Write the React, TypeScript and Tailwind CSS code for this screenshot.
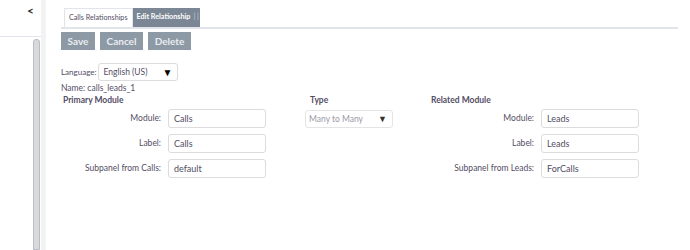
import React from 'react';

const Field = ({ label, value }: { label: string; value: string }) => (
    <div className="flex items-center h-[25px]">
        <span className="flex-1 text-right pr-[7px] text-[8.5px] text-[#534d64]">{label}</span>
        <div className="w-[98px] h-[19px] border border-[#dcdcdc] rounded-[3px] bg-white px-[5px] flex items-center text-[9px] text-[#534d64]">
            {value}
        </div>
    </div>
);

const App = () => {
    return (
        <div className="w-[690px] h-[250px] bg-white flex overflow-hidden" style={{ fontFamily: 'Lato, "Open Sans", sans-serif' }}>
            {/* left sidebar */}
            <div className="w-[41px] flex flex-col bg-white">
                <div className="h-[37px] border-b border-[#e0e4ea] flex justify-end pr-[7px] pt-[2px] text-[12px] font-bold text-[#333]">
                    &lt;
                </div>
                <div className="flex-1 flex justify-end pr-[1px] pt-[2px]">
                    <div className="w-[7px] h-full rounded-t-[3px] bg-[#d9d9d9] border border-[#b9bec6]" />
                </div>
            </div>
            <div className="w-[5px] bg-[#f2f2f2]" />

            {/* main */}
            <div className="flex-1 pl-[15px] pr-[12px] pt-[10px]">
                <div className="flex items-end border-b-2 border-[#e1e4ea] h-[19px] pl-[3px]">
                    <div className="h-[19px] px-[4px] border border-b-0 border-[#e1e4ea] bg-white flex items-center text-[7.2px] text-[#534d64]">
                        Calls Relationships
                    </div>
                    <div className="h-[19px] pl-[4px] pr-[1px] bg-[#7b8794] flex items-center text-[7.2px] font-bold text-white">
                        Edit Relationship <span className="ml-[3px] text-[#c4cad1] font-normal">| |</span>
                    </div>
                </div>

                <div className="flex gap-[5px] mt-[3px]">
                    <div className="w-[34px] h-[18px] bg-[#8e99a6] text-[#e9ecef] text-[10px] font-bold flex items-center justify-center">Save</div>
                    <div className="w-[43px] h-[18px] bg-[#8e99a6] text-[#e9ecef] text-[10px] font-bold flex items-center justify-center">Cancel</div>
                    <div className="w-[43px] h-[18px] bg-[#8e99a6] text-[#e9ecef] text-[10px] font-bold flex items-center justify-center">Delete</div>
                </div>

                <div className="flex items-center mt-[13px] text-[8px] text-[#534d64]">
                    <span>Language:</span>
                    <div className="ml-[2px] w-[80px] h-[18px] border border-[#dcdcdc] rounded-[3px] flex items-center justify-between pl-[4px] pr-[5px] text-[8.5px]">
                        <span>English (US)</span>
                        <span className="text-[10px] text-black">▼</span>
                    </div>
                </div>
                <div className="text-[8.5px] text-[#534d64] mt-[1px] leading-[12px]">Name: calls_leads_1</div>

                <div className="flex mt-[1px]">
                    <div className="w-[205px]">
                        <div className="text-[8.5px] font-bold text-[#534d64] pl-[2px] h-[11px] leading-[11px]">Primary Module</div>
                        <Field label="Module:" value="Calls" />
                        <Field label="Label:" value="Calls" />
                        <Field label="Subpanel from Calls:" value="default" />
                    </div>
                    <div className="w-[160px] pl-[39px]">
                        <div className="text-[8.5px] font-bold text-[#534d64] pl-[5px] h-[11px] leading-[11px]">Type</div>
                        <div className="mt-[4px] w-[88px] h-[18px] border border-[#e4e4e4] rounded-[3px] flex items-center justify-between pl-[3px] pr-[5px] text-[8.5px] text-[#9c9aa8]">
                            <span>Many to Many</span>
                            <span className="text-[9px] text-[#333]">▼</span>
                        </div>
                    </div>
                    <div className="w-[213px]">
                        <div className="text-[8.5px] font-bold text-[#534d64] pl-[5px] h-[11px] leading-[11px]">Related Module</div>
                        <Field label="Module:" value="Leads" />
                        <Field label="Label:" value="Leads" />
                        <Field label="Subpanel from Leads:" value="ForCalls" />
                    </div>
                </div>
            </div>
        </div>
    );
};

export default App;
